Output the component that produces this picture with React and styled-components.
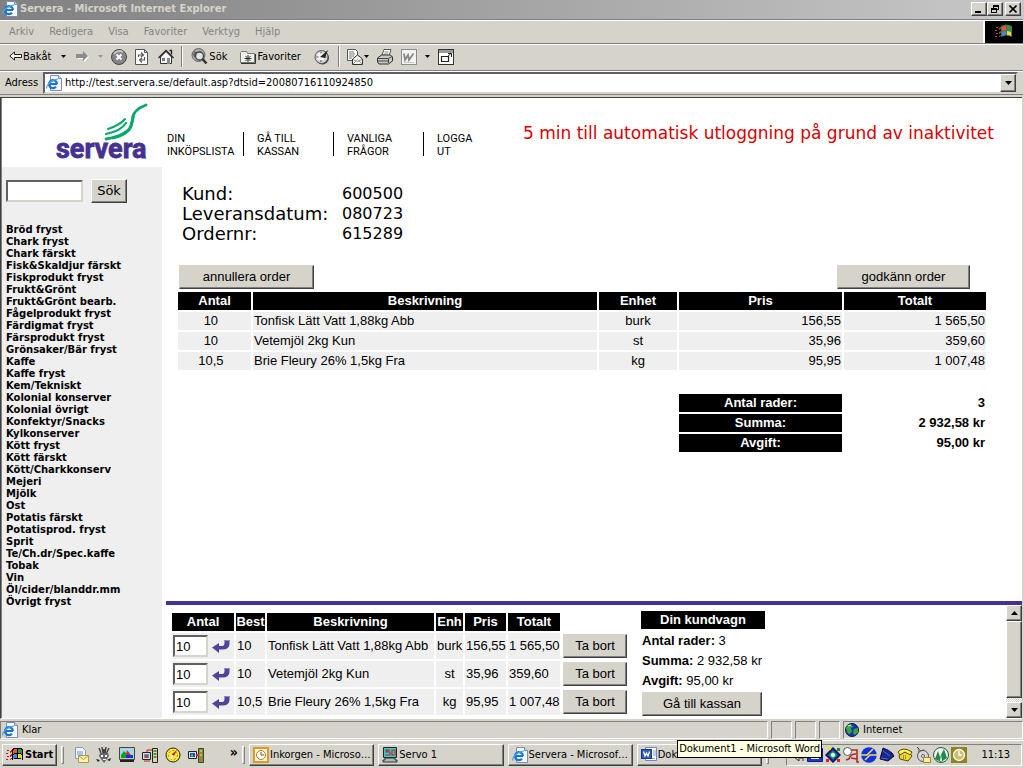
import React from "react";
import styled, { createGlobalStyle, css } from "styled-components";

const face = "#d6d3cb";
const purple = "#443191";
const arial = '"Liberation Sans", Arial, sans-serif';
const tahoma = '"DejaVu Sans Condensed", Tahoma, sans-serif';
const verdana = '"DejaVu Sans", Verdana, sans-serif';

const Global = createGlobalStyle`
  *, *::before, *::after { box-sizing: border-box; }
  body { margin: 0; background: ${face}; color: #000; font: 11px/14px ${tahoma}; }
  button, input { font: inherit; color: inherit; margin: 0; }
  a { color: inherit; text-decoration: none; }
  svg { display: block; flex: none; }
`;

const raised = css`
  border: 1px solid;
  border-color: #fff #404040 #404040 #fff;
  box-shadow: inset -1px -1px 0 #808080;
  background: ${face};
`;
const sunken = css`
  border: 1px solid;
  border-color: #808080 #fff #fff #808080;
`;

const Window = styled.div`
  min-height: 100vh;
  display: flex;
  flex-direction: column;
`;

/* Browser chrome */
const TitleBar = styled.header`
  height: 19px;
  display: flex;
  align-items: center;
  gap: 2px;
  padding: 0 3px 1px 2px;
  background: linear-gradient(90deg, #808080, #c8c8c8);
  color: ${face};
`;
const TitleText = styled.h1`
  margin: 0;
  flex: 1;
  font: bold 11px/16px ${tahoma};
`;
const CaptionButton = styled.button`
  ${raised}
  width: 16px;
  height: 14px;
  padding: 0;
  margin-left: ${(p) => (p.$apart ? 2 : 0)}px;
  margin-right: ${(p) => (p.$apart ? 0 : -2)}px;
  display: grid;
  place-items: center;
`;
const Bar = styled.div`
  height: ${(p) => p.$height}px;
  display: flex;
  align-items: center;
  border-top: 1px solid #fff;
  border-bottom: 1px solid #808080;
  margin-right: 1px;
`;
const MenuBar = styled(Bar).attrs({ as: "nav" })`
  border-top-color: #808080;
  box-shadow: inset 0 1px 0 #fff;
  padding-left: 1px;
  color: #848484;
`;
const MenuItem = styled.button`
  border: 0;
  background: none;
  padding: 0 7px 0 8px;
`;
const Throbber = styled.div`
  margin-left: auto;
  align-self: stretch;
  width: 40px;
  margin-top: 1px;
  border-left: 2px solid #fff;
  background: #000;
  display: grid;
  place-items: center;
`;
const ToolBar = styled(Bar)`
  padding: 0 0 2px 9px;
`;
const Tool = styled.button`
  border: 0;
  background: none;
  padding: 0;
  margin-right: ${(p) => p.$after || 0}px;
  display: flex;
  align-items: center;
  gap: 1px;
`;
const Divider = styled.span`
  width: 2px;
  height: 21px;
  margin-right: ${(p) => p.$after || 0}px;
  border-left: 1px solid #808080;
  border-right: 1px solid #fff;
`;
const AddressBar = styled(Bar)`
  padding: 0 5px 0 5px;
  gap: 5px;
`;
const AddressField = styled.div`
  flex: 1;
  height: 22px;
  display: flex;
  align-items: center;
  background: #fff;
  border: 2px solid;
  border-color: #606068 ${face} ${face} #606068;
  padding-left: 1px;
`;
const AddressInput = styled.input`
  flex: 1;
  border: 0;
  outline: 0;
  padding: 0 0 0 3px;
  background: transparent;
`;
const SmallButton = styled.button`
  ${raised}
  width: 16px;
  height: ${(p) => p.$height}px;
  padding: 0;
  display: grid;
  place-items: center;
`;

/* Page */
const Page = styled.div`
  flex: 1;
  display: flex;
  flex-direction: column;
  margin-top: 2px;
  margin-right: 2px;
  border: 1px solid #404040;
  border-width: 1px 0 0 1px;
  border-bottom: 1px solid #fff;
  box-shadow: inset 1px 0 0 #808080;
  background: #fff;
  padding-left: 1px;
  font-family: ${arial};
`;
const PageHeader = styled.header`
  height: 69px;
  display: flex;
  align-items: flex-start;
`;
const LogoLink = styled.a`
  flex: none;
  width: 165px;
  padding: 4px 0 0 53px;
`;
const NavList = styled.nav`
  flex: none;
  display: flex;
  padding-top: 34px;
`;
const NavLink = styled.a`
  width: ${(p) => (p.$last ? 50 : 90)}px;
  height: 24px;
  font: 11px/13px Roboto, ${arial};
  display: flex;
  justify-content: space-between;
  &:not(:last-child)::after {
    content: "";
    width: 1px;
    height: 24px;
    margin-right: 13px;
    background: #000;
  }
`;
const Warning = styled.p`
  margin: 24px 0 0;
  flex: 1;
  padding-right: 28px;
  text-align: right;
  white-space: nowrap;
  font: 17px/22px ${verdana};
  color: #d80000;
`;
const Columns = styled.div`
  flex: 1;
  display: flex;
`;
const Sidebar = styled.aside`
  width: 160px;
  flex: none;
  background: #efefef;
  padding: 12px 4px;
`;
const SearchForm = styled.form`
  display: flex;
  align-items: center;
  gap: 8px;
`;
const TextBox = styled.input`
  border: 2px solid;
  border-color: #606060 ${face} ${face} #606060;
  background: #fff;
  width: ${(p) => p.$width}px;
  height: ${(p) => p.$height}px;
  padding: 0 0 0 1px;
  font-size: 13px;
`;
const Button = styled.button`
  ${raised}
  border-color: ${(p) => (p.$light ? "#fff #404040 #404040 #fff" : `${face} #404040 #404040 ${face}`)};
  width: ${(p) => p.$width}px;
  height: ${(p) => p.$height || 24}px;
  padding: 0;
  font-family: ${(p) => p.$font || arial};
  font-size: 13px;
  line-height: 16px;
`;
const CategoryList = styled.ul`
  list-style: none;
  margin: 21px 0 0;
  padding: 0;
  white-space: nowrap;
  font: bold 10px/12px ${verdana};
`;
const Main = styled.div`
  flex: 1;
  min-width: 0;
  display: flex;
  flex-direction: column;
`;
const OrderPane = styled.main`
  flex: 1;
  padding: 17px 34px 0 14px;
`;
const Facts = styled.dl`
  margin: 0 0 21px 6px;
  display: grid;
  grid-template-columns: 160px auto;
  font: 16px/20px ${verdana};
`;
const FactName = styled.dt`
  font-size: 18px;
`;
const FactValue = styled.dd`
  margin: 0;
`;
const ButtonRow = styled.div`
  display: flex;
  justify-content: space-between;
  padding: 0 18px 1px 3px;
`;
const DataTable = styled.table`
  border-collapse: separate;
  border-spacing: 2px;
  table-layout: fixed;
  width: ${(p) => p.$width || "100%"};
  font: 13px/18px ${arial};
`;
const Head = styled.th`
  background: #000;
  color: #fff;
  padding: 0;
  height: 18px;
  text-align: center;
`;
const Cell = styled.td`
  background: ${(p) => (p.$plain ? "transparent" : "#efefef")};
  padding: ${(p) => (p.$flush ? "0" : "0 1px")};
  height: ${(p) => p.$height || 18}px;
  text-align: ${(p) => p.$align || "left"};
  font-weight: ${(p) => (p.$bold ? "bold" : "normal")};
  white-space: nowrap;
`;
const Totals = styled.div`
  display: flex;
  justify-content: flex-end;
  margin-top: 20px;
`;
const CartPane = styled.section`
  display: flex;
  margin-left: 4px;
  border-top: 4px solid ${purple};
`;
const CartBody = styled.div`
  flex: 1;
  display: flex;
  gap: 12px;
  padding: 6px 0 1px 4px;
`;
const QuantityCell = styled.div`
  display: flex;
  align-items: center;
  gap: 4px;
`;
const IconButton = styled.button`
  border: 0;
  background: none;
  padding: 0;
`;
const Summary = styled.div`
  width: 124px;
  font: 13px/20px ${arial};
`;
const SummaryTitle = styled.h2`
  margin: 0 0 2px;
  background: #000;
  color: #fff;
  text-align: center;
  font: bold 13px/18px ${arial};
`;
const SummaryLine = styled.p`
  margin: 0;
  padding-left: 1px;
  white-space: nowrap;
`;
const Checkout = styled.div`
  padding: 1px 0 0 1px;
  line-height: 16px;
`;
const ScrollBar = styled.div`
  width: 16px;
  display: flex;
  flex-direction: column;
  background: repeating-conic-gradient(#fff 0 25%, ${face} 0 50%) 0 0 / 2px 2px;
`;
const Thumb = styled.div`
  ${raised}
  flex: 1;
  margin-bottom: 4px;
`;

/* Status bar and taskbar */
const StatusBar = styled.footer`
  height: 21px;
  display: flex;
  gap: 3px;
  padding: 2px 1px 1px 0;
`;
const StatusPanel = styled.div`
  ${sunken}
  flex: ${(p) => (p.$width ? `0 0 ${p.$width}px` : "1")};
  display: flex;
  align-items: center;
  gap: 4px;
  padding-left: 1px;
`;
const TaskBar = styled.footer`
  height: 28px;
  display: flex;
  align-items: center;
  border-top: 1px solid #fff;
  padding: 0 2px;
`;
const StartButton = styled.button`
  ${raised}
  width: 55px;
  height: 22px;
  padding: 0 0 0 2px;
  display: flex;
  align-items: center;
  font: bold 11px/14px ${tahoma};
`;
const Grip = styled.span`
  ${raised}
  border-color: #fff #808080 #808080 #fff;
  box-shadow: none;
  width: 3px;
  height: 18px;
  margin: 0 ${(p) => p.$after}px 0 4px;
`;
const QuickLaunch = styled.div`
  display: flex;
  align-items: center;
  gap: 7px;
  width: 165px;
`;
const More = styled.span`
  margin-left: auto;
  align-self: flex-start;
  font-size: 14px;
  line-height: 10px;
  font-weight: bold;
`;
const Tasks = styled.div`
  flex: 1;
  display: flex;
  gap: 4px;
  min-width: 0;
  position: relative;
`;
const Task = styled.button`
  ${raised}
  flex: 1 1 0;
  min-width: 0;
  height: 22px;
  padding: 0 1px 0 3px;
  display: flex;
  align-items: center;
  gap: 1px;
`;
const TaskLabel = styled.span`
  overflow: hidden;
  text-overflow: ellipsis;
  white-space: nowrap;
`;
const Tooltip = styled.div`
  position: absolute;
  right: -60px;
  top: -4px;
  z-index: 2;
  height: 18px;
  padding: 0 1px;
  border: 1px solid #000;
  background: #ffffe1;
  line-height: 16px;
  white-space: nowrap;
`;
const Tray = styled.div`
  ${sunken}
  width: 236px;
  height: 22px;
  display: flex;
  align-items: center;
  gap: 2px;
  padding: 0 11px 0 2px;
`;
const Clock = styled.time`
  margin-left: auto;
`;

/* Icons */
const Svg = ({ w = 16, h = 16, children, ...rest }) => (
  <svg width={w} height={h} viewBox={`0 0 ${w} ${h}`} aria-hidden="true" {...rest}>{children}</svg>
);
const IeIcon = () => (
  <Svg>
    <path d="M4.500.5h8l3 3v12h-11z" fill="#f4f8ff" stroke="#7c8cb0" />
    <path d="M12.500.5v3h3" fill="#cfdcf2" stroke="#7c8cb0" />
    <path d="M11 9H3.500M11 9a4 4 0 1 0-1 2.800" fill="none" stroke="#1c74d0" strokeWidth="2.200" />
    <path d="M1 13.500C-.5 11 5 4.500 12 4" fill="none" stroke="#49a6ea" strokeWidth="1.200" />
  </Svg>
);
const BackIcon = () => (
  <Svg w={13} h={11}><path d="M5.500 1v2.500h7v3h-7V9L.8 5z" fill="#f4f4f0" stroke="#222" /></Svg>
);
const ForwardIcon = () => (
  <Svg w={14} h={12}>
    <path d="M2 4h6V1l5 5-5 5V8H2z" fill="#fff" />
    <path d="M0 3h7V0l5 5-5 5V7H0z" fill="#8c8c8c" />
  </Svg>
);
const Caret = ({ dim }) => (
  <Svg w={5} h={3}><path d="M0 0h5L2.500 3z" fill={dim ? "#999" : "#000"} /></Svg>
);
const StopIcon = () => (
  <Svg>
    <circle cx="8" cy="8" r="7.500" fill="#858585" stroke="#444" />
    <path d="M3 5a6 5 0 0 1 9-2" stroke="#c4c4c4" strokeWidth="2" fill="none" />
    <path d="M5.500 5.500l5 5M10.500 5.500l-5 5" stroke="#fff" strokeWidth="2" />
  </Svg>
);
const RefreshIcon = () => (
  <Svg w={14}>
    <path d="M.5.5h9l3 3v12H.5z" fill="#fff" stroke="#555" />
    <path d="M9.500.5v3h3" fill="none" stroke="#555" />
    <path d="M3.500 8V6h4M6 3.500L8.500 6 6 8M9.500 8v3h-4M7 9l-2.500 2L7 13.500" fill="none" stroke="#555" strokeWidth="1.200" />
  </Svg>
);
const HomeIcon = () => (
  <Svg>
    <path d="M2.500 8v6.500h11V8L8 2.500z" fill="#f6f6f6" stroke="#333" />
    <path d="M0.500 9L8 1.500 15.500 9M11.500 1.500h2v4" fill="none" stroke="#222" strokeWidth="1.300" />
    <path d="M4 9h3v3H4z" fill="#777" /><path d="M9 9h3v6H9z" fill="#888" />
  </Svg>
);
const SearchIcon = () => (
  <Svg w={17} h={17}>
    <circle cx="7.500" cy="7" r="6.500" fill="#aaa" stroke="#666" />
    <path d="M3 3l3 1 1 3-3 3-2-3z" fill="#666" />
    <circle cx="8.500" cy="8" r="4" fill="#e9eef0" fillOpacity=".85" stroke="#444" strokeWidth="1.300" />
    <path d="M11.500 11l4 4.500" stroke="#333" strokeWidth="2.600" />
  </Svg>
);
const FavoritesIcon = () => (
  <Svg>
    <path d="M.5 13.500V3.500l1-1h5l1 2h7v9z" fill="#efefed" stroke="#777" />
    <path d="M1 14.500h14.500V5" fill="none" stroke="#333" />
    <path d="M8 6v7M4.500 9.500h7M5.500 7l5 5M10.500 7l-5 5" stroke="#333" />
  </Svg>
);
const HistoryIcon = () => (
  <Svg>
    <circle cx="8.500" cy="9" r="6.500" fill="#444" />
    <circle cx="7.500" cy="8" r="6.500" fill="#d4d4d4" stroke="#555" />
    <circle cx="7" cy="7.500" r="4" fill="#f6f6f6" />
    <path d="M7 2.500v2M2.500 8h2M7 11v2M10.500 8h2" fill="none" stroke="#555" />
    <path d="M6 8l8-7-3 8z" fill="#222" />
  </Svg>
);
const MailIcon = () => (
  <Svg>
    <path d="M.5.5h8l2 2v9H.5z" fill="#fff" stroke="#555" />
    <path d="M2 3h5M2 5h6M2 7h5M2 9h3" stroke="#777" />
    <path d="M5.500 10l5-4 5 4v5.500h-10z" fill="#f3f3f0" stroke="#333" />
    <path d="M6 15l4.500-4.500L15 15M6 10.500l4.500 2 4.500-2" fill="none" stroke="#999" />
  </Svg>
);
const PrintIcon = () => (
  <Svg>
    <path d="M5 6l2-5.500h7L12 7z" fill="#fff" stroke="#555" />
    <path d="M7.500 3h4M7 5h4" stroke="#888" />
    <path d="M.5 9l4-3h9l2 2v4l-4 3H2l-1.500-2z" fill="#c8c8c4" stroke="#333" />
    <path d="M1 9.500h10.500l3.500-2M1 12h10.500M11.500 10v4" fill="none" stroke="#444" />
  </Svg>
);
const WordGreyIcon = () => (
  <Svg>
    <rect x=".5" y=".5" width="15" height="15" fill="#f3f3f3" stroke="#8c8c8c" />
    <path d="M3 4.500l1 6.500 3-5 1 5 4.500-6.500" fill="none" stroke="#888" strokeWidth="1.800" />
    <path d="M3 13.500h10" stroke="#ccc" />
  </Svg>
);
const ResizeIcon = () => (
  <Svg>
    <rect x=".5" y=".5" width="15" height="15" fill="#fff" stroke="#333" />
    <path d="M1 1h14v3H1z" fill="#999" />
    <path d="M3.500 7.500h7v5h-7z" fill="#fff" stroke="#222" strokeWidth="1.200" />
    <path d="M9 8l4-3.500M10 4.500h3.500V8" fill="none" stroke="#222" />
  </Svg>
);
const FlagIcon = ({ dark }) => (
  <Svg w={20} h={16} shapeRendering={dark ? "auto" : "crispEdges"}>
    <path d="M5 4l2-1v2l-2 1zM5 8l2-1v2l-2 1zM5 12l2-1v1l-2 1zM2 3h2v1H2zM1 6h2v1H1zM2 9h2v1H2zM1 12h2v1H1z" fill={dark ? "#a04a50" : "#c01818"} />
    <path d="M7 2q5-3 11 0v11q-6-3-11 0z" fill={dark ? "#4c7054" : "#000"} />
    <path d="M8 3q2-1 4-1v4q-2 0-4 1z" fill="#e8582c" />
    <path d="M13 2q2 0 4 1v4q-2-1-4-1z" fill="#2c9840" />
    <path d="M8 8q2-1 4-1v4q-2 0-4 1z" fill="#4888d8" />
    <path d="M13 7q2 0 4 1v4q-2-1-4-1z" fill="#f0d828" />
  </Svg>
);
const ReturnIcon = () => (
  <Svg w={18} h={14}>
    <path d="M12.500 1h5v3.500q0 6-7 6H7V14L0 8.500 7 4v3h3q2.500 0 2.500-3z" fill="#51439a" />
    <path d="M12.500 1h5v1h-5z" fill="#8f84c4" />
  </Svg>
);
const Arrow = ({ up }) => (
  <Svg w={7} h={4}><path d={up ? "M0 4h7L3.500 0z" : "M0 0h7L3.500 4z"} /></Svg>
);
const GlobeIcon = () => (
  <Svg w={14} h={14}>
    <circle cx="7" cy="7" r="6.500" fill="#1636b0" stroke="#101840" />
    <path d="M2 2.500l4-1 2 2-2 2 1 3-3 3-2-3-1-3zM9 6l4-1v4l-3 3-2-2z" fill="#3ca43c" />
    <path d="M3 3l3-1" stroke="#d8ffd8" />
  </Svg>
);
const Logo = () => (
  <svg width="96" height="60" viewBox="0 0 96 60" role="img" aria-label="servera">
    <g fill="none" stroke="#06a968" strokeLinecap="round">
      <path d="M91 3Q78 8 78 16L76 24Q72 33 51 37" strokeWidth="2.800" />
      <path d="M78 14Q77 24 74 28 68 34 58 36" strokeWidth="2.800" />
      <path d="M70 17Q65 23 53 27" strokeWidth="2" />
      <path d="M71 21Q66 29 51 32" strokeWidth="2.200" />
    </g>
    <text x="1" y="56" fontFamily="Roboto, sans-serif" fontWeight="bold" fontSize="27" fill={purple} stroke={purple} strokeWidth=".8">servera</text>
  </svg>
);

const OutlookExpressIcon = () => (
  <Svg>
    <path d="M2.500 .5h7l3 3v8h-10z" fill="#f0f4ff" stroke="#8894b8" />
    <path d="M4 4h6v4H4z" fill="#a8c4e8" />
    <path d="M5.500 8.500h10v7h-10z" fill="#fff4b0" stroke="#b09848" />
    <path d="M5.500 8.500l5 4 5-4" fill="none" stroke="#b09848" />
  </Svg>
);
const HareIcon = () => (
  <Svg>
    <path d="M3 1l2 5M6 0l1 6M10 0L9 6M13 1l-3 6M8 2v4" stroke="#444" strokeWidth="1.500" />
    <path d="M4 6h8l1 3-2 3-3 4-3-4-2-3z" fill="#666" />
    <path d="M5 8h2v2H5zM9 8h2v2H9zM7 12h3v1H7z" fill="#fff" />
    <path d="M0 12l4 1-2 2zM15 11l-4 2 3 1z" fill="#222" />
  </Svg>
);
const MonitorIcon = () => (
  <Svg>
    <path d="M.5 .5h15v12H.5z" fill="#c8c8c0" stroke="#444" />
    <path d="M2 2h12v9H2z" fill="#90e0ff" />
    <path d="M2 11V8l3-4 5 5v2z" fill="#10a020" /><path d="M8 3l4 5H7z" fill="#f02010" /><path d="M7 8h7v3H7z" fill="#1030e0" />
    <path d="M1 13h14v2H1z" fill="#222" />
  </Svg>
);
const NetworkIcon = () => (
  <Svg>
    <path d="M.5 5.500h8v7h-8z" fill="#ddd" stroke="#222" />
    <path d="M2 7h5v4H2z" fill="#20b0e0" /><path d="M3 8h3v3H3z" fill="#e03030" />
    <path d="M10.500 1.500h5v14h-5z" fill="#d8d8a8" stroke="#222" />
    <path d="M11.500 4h3M11.500 7h3M11.500 10h3" stroke="#208020" strokeWidth="1.500" />
    <path d="M5 5V3h5M2 14h6" fill="none" stroke="#c02020" />
  </Svg>
);
const CompassIcon = () => (
  <Svg><circle cx="8" cy="8" r="7" fill="#ffe838" stroke="#222" /><circle cx="8" cy="8" r="4.500" fill="none" stroke="#a88c10" strokeDasharray="2 2" /><path d="M12 3L6.500 7.500 9 9z" fill="#c02020" /><path d="M5 13l1.500-5.500L9 9z" fill="#fff" /></Svg>
);
const TransferIcon = () => (
  <Svg>
    <path d="M.5 4.500h8v7h-8z" fill="#ddd" stroke="#222" /><path d="M2 6h5v4H2z" fill="#2048d0" /><path d="M3 7h2v3H3z" fill="#30c040" />
    <path d="M10.500 1.500h5v14h-5z" fill="#8c8c40" stroke="#444420" /><path d="M12 4h2M12 8h2" stroke="#f0f080" />
    <path d="M8 8h3" stroke="#e02020" strokeWidth="2" />
  </Svg>
);
const OutlookIcon = () => (
  <Svg><rect x="1" y="1" width="14" height="14" fill="#fff8e4" stroke="#e09820" strokeWidth="2" /><circle cx="8" cy="8" r="4.500" fill="#fff" stroke="#b87818" /><path d="M8 5v3h3" fill="none" stroke="#705010" /></Svg>
);
const ServoIcon = () => (
  <Svg>
    <path d="M1.500.5h13v10h-13z" fill="#20d8d8" stroke="#222" /><path d="M3 3h2l-1 2h2M8 3H6v2h2v3H5M10 3h3v5h-3zM3 8h2" fill="none" stroke="#e01818" strokeWidth="1.200" />
    <path d="M3 11h10v2h2v2H1v-2h2z" fill="#b8b8b0" stroke="#333" />
  </Svg>
);
const WordIcon = () => (
  <Svg>
    <path d="M4.500.5h11v13h-11z" fill="#fff" stroke="#6c88c0" /><path d="M12 4h3M12 6h3M12 8h3M6 11.500h8" stroke="#88a0d0" />
    <rect x=".5" y="2.500" width="10" height="9" fill="#2c58b8" stroke="#1c3c88" /><path d="M2.500 4.500L4 9l1.500-3L7 9l1.500-4.500" fill="none" stroke="#fff" strokeWidth="1.300" />
  </Svg>
);
const SpeakerIcon = () => (
  <Svg><path d="M1 6h4l5-4v12l-5-4H1z" fill="#f0e080" stroke="#333" /><path d="M12 4v8M14 2v12" stroke="#333" /></Svg>
);
const DisplayIcon = () => (
  <Svg><path d="M.5 1.500h15v13H.5z" fill="#1838d8" stroke="#0c1c80" /><path d="M4 10h8v2H4z" fill="#fff" /></Svg>
);
const SyncIcon = () => (
  <Svg><path d="M8 1l7 7-7 7-7-7z" fill="#1838b8" stroke="#0c1850" strokeWidth="1.500" /><path d="M8 4l4 4-4 4-4-4z" fill="#28b838" /><circle cx="8" cy="8" r="2" fill="#e8f0ff" /><path d="M3 0h3v3H3z" fill="#f8e020" /><path d="M1 12h3v3H1zM12 12h3v3h-3z" fill="#e02020" /><path d="M12 1h3v3h-3z" fill="#109030" /></Svg>
);
const MagnifierIcon = () => (
  <Svg><path d="M8 3h6v12h2M13 7q-6 0-7 5l-3 1M8 11l6 1" fill="none" stroke="#b02828" strokeWidth="1.600" /><circle cx="4.500" cy="4.500" r="4" fill="#fff" stroke="#555" /></Svg>
);
const BlueDiscIcon = () => (
  <Svg><circle cx="8" cy="8" r="7.800" fill="#1030e0" /><path d="M0 8h6l6-6M4 13l5-5h7" fill="none" stroke="#f0e050" strokeWidth="1.500" /></Svg>
);
const DeviceIcon = () => (
  <Svg><path d="M4 1q6 2 9 5l2 3-6 5-8-2z" fill="#18288c" stroke="#080c40" /><path d="M4 4l7 5M2 11l7 1" stroke="#5068d8" /></Svg>
);
const PhoneIcon = () => (
  <Svg><path d="M2 8l3-3h7l3 4-4 5-8-2z" fill="#f0dc28" stroke="#554808" /><path d="M1 5q5-6 14 0l-2 3-5-3-5 3z" fill="#fff060" stroke="#554808" /><path d="M6 9h4M6 11h4" stroke="#554808" strokeDasharray="1 1" /></Svg>
);
const DiscIcon = () => (
  <Svg><path d="M2 0l2 2v5M5 4l4-1" stroke="#333" fill="none" /><circle cx="8" cy="9" r="5.500" fill="#d8d8d8" stroke="#555" /><circle cx="8" cy="9" r="1.500" fill="#fff" stroke="#555" /><path d="M8.500 10.500h7v5h-7z" fill="#fff0a0" stroke="#a08820" /></Svg>
);
const ForestIcon = () => (
  <Svg><circle cx="8" cy="8" r="7.500" fill="#e8f4ee" stroke="#285838" /><path d="M2 12l3-8 2 6 4-8 3 9-6 4z" fill="#208848" /><path d="M7 14l1-6 1 6z" fill="#fff" /></Svg>
);
const ReminderIcon = () => (
  <Svg><path d="M0 0h16v16H0z" fill="#8c8420" /><circle cx="8" cy="8" r="5.500" fill="#c8c070" stroke="#fff" strokeWidth="1.300" /><path d="M8 4v4h3" fill="none" stroke="#fff" strokeWidth="1.300" /></Svg>
);

/* Data */
const menus = ["Arkiv", "Redigera", "Visa", "Favoriter", "Verktyg", "Hjälp"];
const navigation = [["DIN", "INKÖPSLISTA"], ["GÅ TILL", "KASSAN"], ["VANLIGA", "FRÅGOR"], ["LOGGA", "UT"]];
const categories = [
  "Bröd fryst", "Chark fryst", "Chark färskt", "Fisk&Skaldjur färskt", "Fiskprodukt fryst", "Frukt&Grönt",
  "Frukt&Grönt bearb.", "Fågelprodukt fryst", "Färdigmat fryst", "Färsprodukt fryst", "Grönsaker/Bär fryst",
  "Kaffe", "Kaffe fryst", "Kem/Tekniskt", "Kolonial konserver", "Kolonial övrigt", "Konfektyr/Snacks",
  "Kylkonserver", "Kött fryst", "Kött färskt", "Kött/Charkkonserv", "Mejeri", "Mjölk", "Ost", "Potatis färskt",
  "Potatisprod. fryst", "Sprit", "Te/Ch.dr/Spec.kaffe", "Tobak", "Vin", "Öl/cider/blanddr.mm", "Övrigt fryst",
];
const facts = [["Kund:", "600500"], ["Leveransdatum:", "080723"], ["Ordernr:", "615289"]];
const lines = [
  { qty: "10", name: "Tonfisk Lätt Vatt 1,88kg Abb", unit: "burk", price: "156,55", total: "1 565,50" },
  { qty: "10", name: "Vetemjöl 2kg Kun", unit: "st", price: "35,96", total: "359,60" },
  { qty: "10,5", name: "Brie Fleury 26% 1,5kg Fra", unit: "kg", price: "95,95", total: "1 007,48" },
];
const totals = [["Antal rader:", "3"], ["Summa:", "2 932,58 kr"], ["Avgift:", "95,00 kr"]];
const tasks = [
  [OutlookIcon, "Inkorgen - Microsoft Outlook"],
  [ServoIcon, "Servo 1"],
  [IeIcon, "Servera - Microsoft Internet Explorer"],
  [WordIcon, "Dokument1 - Microsoft Word"],
];
const quick = [OutlookExpressIcon, HareIcon, MonitorIcon, NetworkIcon, CompassIcon, TransferIcon];
const tray = [SpeakerIcon, DisplayIcon, SyncIcon, MagnifierIcon, BlueDiscIcon, DeviceIcon, PhoneIcon, DiscIcon, ForestIcon, ReminderIcon];

function BrowserChrome() {
  return (
    <>
      <TitleBar>
        <IeIcon />
        <TitleText>Servera - Microsoft Internet Explorer</TitleText>
        <CaptionButton aria-label="Minimera"><Svg w={8} h={8}><path d="M0 6h6v2H0z" /></Svg></CaptionButton>
        <CaptionButton aria-label="Återställ"><Svg w={8} h={8} shapeRendering="crispEdges"><path d="M2 0h6v5H6V4h1V2H3v1H2zM0 3h6v5H0zM1 5v2h4V5z" fillRule="evenodd" /></Svg></CaptionButton>
        <CaptionButton $apart aria-label="Stäng"><Svg w={8} h={8}><path d="M.5.5l7 7M7.500.5l-7 7" stroke="#000" strokeWidth="1.600" /></Svg></CaptionButton>
      </TitleBar>
      <MenuBar $height={25}>
        {menus.map((m) => <MenuItem key={m}>{m}</MenuItem>)}
        <Throbber><FlagIcon dark /></Throbber>
      </MenuBar>
      <ToolBar $height={27}>
        <Tool $after={10}><BackIcon />Bakåt</Tool>
        <Tool $after={10} aria-label="Bakåthistorik"><Caret /></Tool>
        <Tool $after={8} aria-label="Framåt"><ForwardIcon /></Tool>
        <Tool $after={8} aria-label="Framåthistorik"><Caret dim /></Tool>
        <Tool $after={8} aria-label="Stopp"><StopIcon /></Tool>
        <Tool $after={9} aria-label="Uppdatera"><RefreshIcon /></Tool>
        <Tool $after={7} aria-label="Startsida"><HomeIcon /></Tool>
        <Divider $after={8} />
        <Tool $after={13}><SearchIcon />Sök</Tool>
        <Tool $after={13}><FavoritesIcon />Favoriter</Tool>
        <Tool $after={8} aria-label="Tidigare"><HistoryIcon /></Tool>
        <Divider $after={7} />
        <Tool $after={8} aria-label="E-post"><MailIcon /><Caret /></Tool>
        <Tool $after={8} aria-label="Skriv ut"><PrintIcon /></Tool>
        <Tool $after={8} aria-label="Redigera i Word"><WordGreyIcon /></Tool>
        <Tool $after={8} aria-label="Redigeringsval"><Caret /></Tool>
        <Tool aria-label="Helskärm"><ResizeIcon /></Tool>
      </ToolBar>
      <AddressBar $height={24}>
        <label htmlFor="address">Adress</label>
        <AddressField>
          <IeIcon />
          <AddressInput id="address" defaultValue="http://test.servera.se/default.asp?dtsid=20080716110924850" />
          <SmallButton $height={18} aria-label="Visa adresser"><Arrow /></SmallButton>
        </AddressField>
      </AddressBar>
    </>
  );
}

function Order() {
  return (
    <OrderPane>
      <Facts>
        {facts.map(([k, v]) => (
          <React.Fragment key={k}><FactName>{k}</FactName><FactValue>{v}</FactValue></React.Fragment>
        ))}
      </Facts>
      <ButtonRow>
        <Button $width={135}>annullera order</Button>
        <Button $width={133}>godkänn order</Button>
      </ButtonRow>
      <DataTable>
        <colgroup><col width="73" /><col /><col width="78" /><col width="163" /><col width="142" /></colgroup>
        <thead><tr>{["Antal", "Beskrivning", "Enhet", "Pris", "Totalt"].map((h) => <Head key={h} scope="col">{h}</Head>)}</tr></thead>
        <tbody>
          {lines.map((l) => (
            <tr key={l.name}>
              <Cell $align="center">{l.qty}&nbsp;&nbsp;</Cell>
              <Cell>{l.name}</Cell>
              <Cell $align="center">{l.unit}</Cell>
              <Cell $align="right">{l.price}</Cell>
              <Cell $align="right">{l.total}</Cell>
            </tr>
          ))}
        </tbody>
      </DataTable>
      <Totals>
        <DataTable $width="311px">
          <colgroup><col width="163" /><col width="142" /></colgroup>
          <tbody>
            {totals.map(([k, v]) => (
              <tr key={k}><Head scope="row">{k}</Head><Cell $plain $bold $align="right">{v}</Cell></tr>
            ))}
          </tbody>
        </DataTable>
      </Totals>
    </OrderPane>
  );
}

function Cart() {
  return (
    <CartPane>
      <CartBody>
        <DataTable $width="459px">
          <colgroup><col width="62" /><col width="29" /><col width="167" /><col width="27" /><col width="41" /><col width="52" /><col width="65" /></colgroup>
          <thead><tr>{["Antal", "Best", "Beskrivning", "Enh", "Pris", "Totalt"].map((h) => <Head key={h} scope="col">{h}</Head>)}</tr></thead>
          <tbody>
            {lines.map((l) => (
              <tr key={l.name}>
                <Cell $height={26}>
                  <QuantityCell>
                    <TextBox $width={35} $height={22} defaultValue="10" aria-label={`Antal ${l.name}`} />
                    <IconButton aria-label={`Uppdatera ${l.name}`}><ReturnIcon /></IconButton>
                  </QuantityCell>
                </Cell>
                <Cell $height={26}>{l.qty}</Cell>
                <Cell $height={26}>{l.name}</Cell>
                <Cell $height={26} $align="center">{l.unit}</Cell>
                <Cell $height={26}>{l.price}</Cell>
                <Cell $height={26}>{l.total}</Cell>
                <Cell $height={26} $plain $flush $align="right"><Button $width={64}>Ta bort</Button></Cell>
              </tr>
            ))}
          </tbody>
        </DataTable>
        <Summary>
          <SummaryTitle>Din kundvagn</SummaryTitle>
          {totals.map(([k, v]) => <SummaryLine key={k}><b>{k}</b> {v}</SummaryLine>)}
          <Checkout><Button $width={120}>Gå till kassan</Button></Checkout>
        </Summary>
      </CartBody>
      <ScrollBar>
        <SmallButton $height={16} aria-label="Rulla upp"><Arrow up /></SmallButton>
        <Thumb />
        <SmallButton $height={16} aria-label="Rulla ned"><Arrow /></SmallButton>
      </ScrollBar>
    </CartPane>
  );
}

export default function App() {
  return (
    <Window>
      <Global />
      <BrowserChrome />
      <Page>
        <PageHeader>
          <LogoLink href="#start"><Logo /></LogoLink>
          <NavList>
            {navigation.map(([a, b], i) => (
              <NavLink key={a} href="#nav" $last={i === navigation.length - 1}><span>{a}<br />{b}</span></NavLink>
            ))}
          </NavList>
          <Warning>5 min till automatisk utloggning på grund av inaktivitet</Warning>
        </PageHeader>
        <Columns>
          <Sidebar>
            <SearchForm onSubmit={(e) => e.preventDefault()}>
              <TextBox $width={77} $height={22} aria-label="Sök artikel" />
              <Button $light $width={36} $font={verdana}>Sök</Button>
            </SearchForm>
            <CategoryList>
              {categories.map((c) => <li key={c}><a href="#kategori">{c}</a></li>)}
            </CategoryList>
          </Sidebar>
          <Main>
            <Order />
            <Cart />
          </Main>
        </Columns>
      </Page>
      <StatusBar>
        <StatusPanel><IeIcon />Klar</StatusPanel>
        <StatusPanel $width={21} />
        <StatusPanel $width={21} />
        <StatusPanel $width={21} />
        <StatusPanel $width={180}><GlobeIcon />Internet</StatusPanel>
      </StatusBar>
      <TaskBar>
        <StartButton><FlagIcon />Start</StartButton>
        <Grip $after={9} />
        <QuickLaunch>
          {quick.map((Icon, i) => <IconButton key={i} aria-label={`Snabbstart ${i + 1}`}><Icon /></IconButton>)}
          <More>»</More>
        </QuickLaunch>
        <Grip $after={4} />
        <Tasks>
          {tasks.map(([Icon, label]) => <Task key={label}><Icon /><TaskLabel>{label}</TaskLabel></Task>)}
          <Tooltip role="tooltip">Dokument1 - Microsoft Word</Tooltip>
        </Tasks>
        <Grip $after={17} />
        <Tray>
          {tray.map((Icon, i) => <Icon key={i} />)}
          <Clock>11:13</Clock>
        </Tray>
      </TaskBar>
    </Window>
  );
}
